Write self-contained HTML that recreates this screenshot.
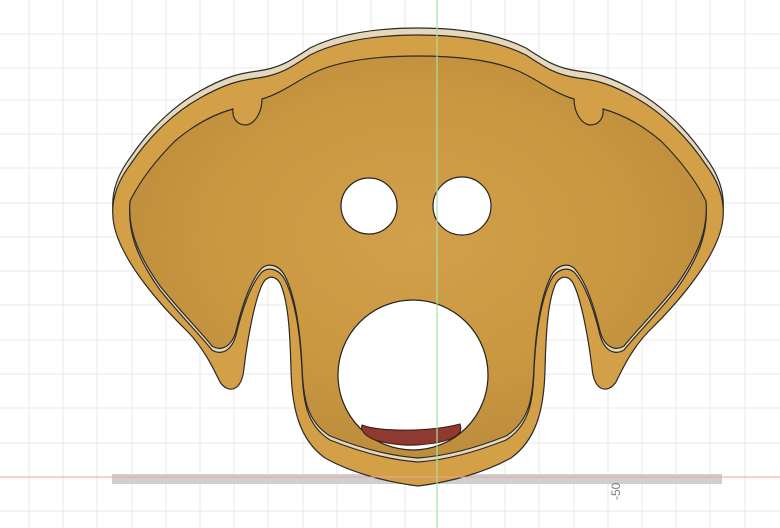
<!DOCTYPE html>
<html><head><meta charset="utf-8"><style>
html,body{margin:0;padding:0;background:#fff;width:780px;height:528px;overflow:hidden}
svg{display:block}
</style></head><body>
<svg width="780" height="528" viewBox="0 0 780 528" xmlns="http://www.w3.org/2000/svg">
<defs>
<radialGradient id="fl" cx="0.5" cy="0.45" r="0.6">
<stop offset="0" stop-color="#d2a04a"/><stop offset="0.6" stop-color="#c99740"/><stop offset="1" stop-color="#b98a3c"/>
</radialGradient>
<g id="outer"><path d="M418,35 C380,35 340,40 310,55 C290,68 280,75 258,78 C240,80 225,84 200,98 C175,112 150,135 130,165 C115,185 110,205 114,225 C120,255 150,295 188,332 C205,350 214,370 220,382 C228,394 242,392 244,368 C248,335 255,300 262,285 C266,276 274,274 280,283 C288,300 290,330 291,370 C292,410 300,440 325,458 C350,472 385,482 418,486 C451,482 486,472 511,458 C536,440 544,410 545,370 C546,330 548,300 556,283 C562,274 570,276 574,285 C581,300 588,335 592,368 C594,392 608,394 616,382 C622,370 631,350 648,332 C686,295 716,255 722,225 C726,205 721,185 706,165 C686,135 661,112 636,98 C611,84 596,80 578,78 C556,75 546,68 526,55 C496,40 456,35 418,35 Z"/></g>
<g id="floor"><path d="M418,60 C380,60 345,64 320,74 C300,82 285,96 262,103 C262,116 255,128 246,129 C237,129 232,122 233,113 C215,118 195,128 175,145 C155,165 140,185 130,205 C128,230 135,255 160,290 C180,315 200,335 212,350 C222,356 232,350 236,335 C242,310 250,285 262,272 C270,266 280,270 285,280 C295,300 300,330 302,370 C303,400 306,425 330,440 C360,452 390,460 418,462 C446,460 476,452 506,440 C530,425 533,400 534,370 C536,330 541,300 551,280 C556,270 566,266 574,272 C586,285 594,310 600,335 C604,350 614,356 624,350 C636,335 656,315 676,290 C701,255 708,230 706,205 C696,185 681,165 661,145 C641,128 621,118 603,113 C604,122 599,129 590,129 C581,128 574,116 574,103 C551,96 536,82 516,74 C491,64 456,60 418,60 Z"/></g>
</defs>
<g stroke="#e9e9e9" stroke-width="1">
<line x1="63" y1="0" x2="63" y2="528"/><line x1="97" y1="0" x2="97" y2="528"/><line x1="132" y1="0" x2="132" y2="528"/><line x1="166" y1="0" x2="166" y2="528"/><line x1="200" y1="0" x2="200" y2="528"/><line x1="234" y1="0" x2="234" y2="528"/><line x1="268" y1="0" x2="268" y2="528"/><line x1="303" y1="0" x2="303" y2="528"/><line x1="337" y1="0" x2="337" y2="528"/><line x1="371" y1="0" x2="371" y2="528"/><line x1="405" y1="0" x2="405" y2="528"/><line x1="471" y1="0" x2="471" y2="528"/><line x1="505" y1="0" x2="505" y2="528"/><line x1="539" y1="0" x2="539" y2="528"/><line x1="574" y1="0" x2="574" y2="528"/><line x1="608" y1="0" x2="608" y2="528"/><line x1="642" y1="0" x2="642" y2="528"/><line x1="676" y1="0" x2="676" y2="528"/><line x1="710" y1="0" x2="710" y2="528"/><line x1="745" y1="0" x2="745" y2="528"/><line x1="29" y1="0" x2="29" y2="528"/>
<line x1="0" y1="511" x2="780" y2="511"/><line x1="0" y1="443" x2="780" y2="443"/><line x1="0" y1="408" x2="780" y2="408"/><line x1="0" y1="374" x2="780" y2="374"/><line x1="0" y1="340" x2="780" y2="340"/><line x1="0" y1="305" x2="780" y2="305"/><line x1="0" y1="271" x2="780" y2="271"/><line x1="0" y1="237" x2="780" y2="237"/><line x1="0" y1="203" x2="780" y2="203"/><line x1="0" y1="168" x2="780" y2="168"/><line x1="0" y1="134" x2="780" y2="134"/><line x1="0" y1="100" x2="780" y2="100"/><line x1="0" y1="68" x2="780" y2="68"/><line x1="0" y1="34" x2="780" y2="34"/>
</g>
<rect x="112" y="474" width="610" height="10" fill="#cfcfcf"/>
<g stroke="#2a2a2a" stroke-width="1.2">
<use href="#outer" fill="#e6d7bb" transform="translate(0,-7)"/>
<use href="#outer" fill="#d4a047"/>
<use href="#floor" fill="#e6d7bb"/>
<use href="#floor" fill="url(#fl)" transform="translate(0,-4)"/>
</g>
<g fill="#fff" stroke="#222" stroke-width="1.2">
<circle cx="369" cy="206" r="28"/>
<circle cx="462" cy="206" r="29"/>
<circle cx="413" cy="375" r="75"/>
</g>
<path d="M362,425 C380,432 430,432 460,424 C462,430 460,434 456,436 C440,446 400,448 375,440 C365,436 360,430 362,425 Z" fill="#8e3a30" stroke="#3a1a15" stroke-width="1"/>
<path d="M370,436 C395,450 430,448 452,436 C435,446 395,450 370,436 Z" fill="#6a2a24"/>
<line x1="437" y1="0" x2="437" y2="528" stroke="#a8e0a0" stroke-width="1.2"/>
<line x1="0" y1="477" x2="780" y2="477" stroke="#f0a0a0" stroke-width="1"/>
<text x="0" y="0" transform="translate(620,500) rotate(-90)" font-family="Liberation Sans, sans-serif" font-size="12" fill="#777">-50</text>
</svg>
</body></html>
